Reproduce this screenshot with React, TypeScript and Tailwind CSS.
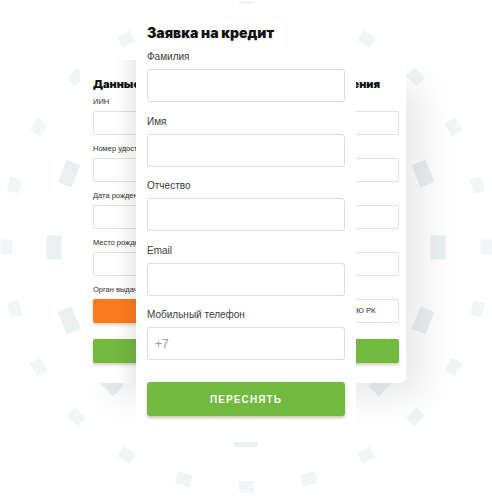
const CX = 246;
const CY = 247;

const outerAngles = Array.from({ length: 24 }, (_, i) => i * 15);
const innerAngles = Array.from({ length: 16 }, (_, i) => i * 22.5);

function Tile({ angle, r, w, h, className }: { angle: number; r: number; w: number; h: number; className: string }) {
  const rad = (angle * Math.PI) / 180;
  const x = CX - r * Math.sin(rad);
  const y = CY + r * Math.cos(rad);
  return (
    <div
      className={`absolute ${className}`}
      style={{ left: x - w / 2, top: y - h / 2, width: w, height: h, transform: `rotate(${angle}deg)` }}
    />
  );
}

function BackField({ label }: { label: string }) {
  return (
    <div className="flex flex-col">
      <span className="h-[10px] text-[7.5px] leading-[10px] text-[#2e2e2e] mb-[4px] whitespace-nowrap">{label}</span>
      <div className="h-[24px] rounded-[2px] border border-[#e1e1e1] bg-white" />
    </div>
  );
}

function Field({ label, placeholder }: { label: string; placeholder?: string }) {
  return (
    <div className="flex flex-col">
      <span className="h-[12px] text-[10px] leading-[12px] text-[#3b3b3b] mb-[6px]">{label}</span>
      <div className="h-[33px] rounded-[3px] border border-[#dddddd] bg-white flex items-center px-[7px] text-[12px] text-[#9b9b9b]">
        {placeholder}
      </div>
    </div>
  );
}

export default function App() {
  return (
    <div className="relative w-[492px] h-[503px] overflow-hidden bg-white font-['Liberation_Sans',Arial,sans-serif]">
      {outerAngles.map((a) => (
        <Tile key={`o${a}`} angle={a} r={240} w={15} h={12} className="bg-[#f2f5f5]" />
      ))}
      {innerAngles.map((a) => (
        <Tile key={`i${a}`} angle={a} r={192} w={24} h={15} className="bg-[#eaeff0]" />
      ))}

      {/* карточка с данными удостоверения */}
      <div className="absolute left-[80px] top-[60px] w-[326px] h-[323px] rounded-[6px] bg-white pl-[13px] pr-[7px] pt-[17px] shadow-[24px_20px_36px_-6px_rgba(0,0,0,0.09)]">
        <div className="flex justify-between pr-[19px] h-[14px] text-[11px] leading-[14px] font-black text-[#111] font-['Inter',sans-serif] whitespace-nowrap">
          <span>Данные документа</span>
          <span>для удостоверения</span>
        </div>
        <div className="mt-[6px] flex flex-col gap-[9px]">
          <BackField label="ИИН" />
          <BackField label="Номер удостоверения" />
          <BackField label="Дата рождения" />
          <BackField label="Место рождения" />
          <div className="flex flex-col">
            <span className="h-[10px] text-[7.5px] leading-[10px] text-[#2e2e2e] mb-[4px]">Орган выдачи</span>
            <div className="flex gap-[3px] h-[24px]">
              <div className="flex-1 rounded-[2px] bg-[#fd7b1f] shadow-[0_2px_3px_rgba(120,70,20,0.25)]" />
              <div className="w-[56px] rounded-[2px] border border-[#e1e1e1] flex items-center pl-[6px] text-[7.5px] text-[#2e2e2e]">
                МЮ РК
              </div>
            </div>
          </div>
        </div>
        <button className="mt-[16px] w-full h-[24px] rounded-[2px] bg-[#72b940] text-white text-[8px] font-bold tracking-[1px] shadow-[0_2px_3px_rgba(110,90,30,0.3)]">
          ДАЛЕЕ
        </button>
        <div className="absolute left-[36px] top-0 bottom-0 w-[20px] pointer-events-none bg-gradient-to-r from-transparent to-[rgba(0,0,0,0.08)]" />
      </div>

      {/* основная форма */}
      <div className="absolute left-[136px] top-[4px] w-[220px] h-[438px] rounded-[6px] bg-white px-[11px] pt-[20px]">
        <h1 className="h-[18px] text-[14px] leading-[18px] font-black text-[#111] font-['Inter',sans-serif] whitespace-nowrap">
          Заявка на кредит
        </h1>
        <div className="mt-[9px] flex flex-col gap-[13.5px]">
          <Field label="Фамилия" />
          <Field label="Имя" />
          <Field label="Отчество" />
          <Field label="Email" />
          <Field label="Мобильный телефон" placeholder="+7" />
        </div>
        <button className="mt-[22px] w-full h-[34px] rounded-[3px] bg-[#72b940] text-white text-[10px] font-bold tracking-[1.1px] shadow-[0_2px_3px_rgba(120,90,40,0.35)]">
          ПЕРЕСНЯТЬ
        </button>
      </div>
    </div>
  );
}
